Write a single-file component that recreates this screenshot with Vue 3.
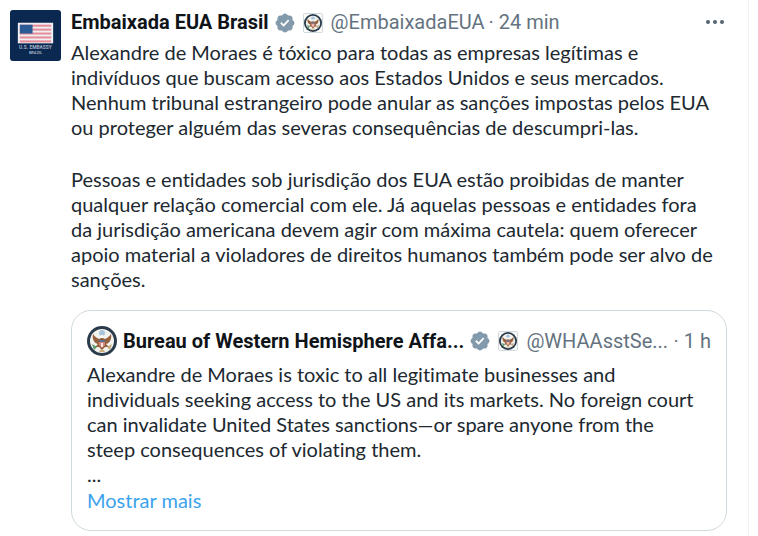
<template>
  <main class="timeline">
    <article class="tweet">
      <a class="avatar" href="#" aria-label="Embaixada EUA Brasil">
        <svg viewBox="0 0 52 52" aria-hidden="true">
          <rect width="52" height="52" rx="3" fill="#0b2850" />
          <rect x="8" y="13" width="36" height="21" fill="#f1eef2" />
          <rect v-for="n in 5" :key="n" x="10" :y="11 + n * 4" width="32" height="2" fill="#e58b97" />
          <rect x="10" y="15" width="13" height="9" fill="#2c5a94" />
          <text x="26" y="40" class="avatar-text">U.S. EMBASSY</text>
          <text x="26" y="45" class="avatar-text small">BRAZIL</text>
        </svg>
      </a>

      <div class="content">
        <header class="tweet-header">
          <a class="name" href="#">Embaixada EUA Brasil</a>
          <svg class="verified" viewBox="0 0 22 22" aria-hidden="true">
            <path :d="badgePath" fill="#829aab" />
          </svg>
          <svg class="seal" viewBox="0 0 20 20" aria-hidden="true">
            <rect x="0.5" y="0.5" width="19" height="19" rx="1" fill="#fafbfb" stroke="#cfd9de" />
            <use href="#eagle-seal" x="1" y="1" width="18" height="18" />
          </svg>
          <a class="handle" href="#">@EmbaixadaEUA</a>
          <span class="time">· 24 min</span>
          <button class="more" type="button" aria-label="Mais">
            <svg viewBox="0 0 20 20" aria-hidden="true">
              <circle v-for="x in [3, 10, 17]" :key="x" :cx="x" cy="9" r="2" fill="#536471" />
            </svg>
          </button>
        </header>

        <p v-for="(text, i) in paragraphs" :key="i" class="text">{{ text }}</p>

        <section class="quote">
          <header class="quote-header">
            <svg class="quote-avatar" viewBox="0 0 30 30" aria-hidden="true">
              <symbol id="eagle-seal" viewBox="0 0 30 30">
                <circle cx="15" cy="15" r="15" fill="#2a3b4c" />
                <circle cx="15" cy="15" r="12" fill="#f2f2ee" />
                <circle cx="15" cy="7" r="3" fill="#a9c5dc" />
                <path d="M6 8c-1 5 1 9 5 10l-3 3 4 0 3 3 3-3 4 0-3-3c4-1 6-5 5-10-2 3-4 4-6 5l-2-1-1-2-1 2-2 1c-2-1-4-2-6-5z" fill="#94603d" />
                <path d="M14 9h2l1 3h-4z" fill="#fbfaf5" />
                <path d="M12 14h6v5l-3 3-3-3z" fill="#d9857a" />
                <path d="M12 14h6v2h-6z" fill="#56708f" />
                <path d="M14 17h2v4h-2z" fill="#f7e6df" />
                <path d="M5 18l5 3-3 3z" fill="#5b9b6a" />
                <path d="M25 18l-5 3 3 3z" fill="#c5a97b" />
                <path d="M13 24h4l1 2h-6z" fill="#cbb079" />
              </symbol>
              <use href="#eagle-seal" width="30" height="30" />
            </svg>
            <a class="name" href="#">Bureau of Western Hemisphere Affa...</a>
            <svg class="verified" viewBox="0 0 22 22" aria-hidden="true">
              <path :d="badgePath" fill="#829aab" />
            </svg>
            <svg class="seal" viewBox="0 0 20 20" aria-hidden="true">
              <rect x="0.5" y="0.5" width="19" height="19" rx="1" fill="#fafbfb" stroke="#cfd9de" />
              <use href="#eagle-seal" x="1" y="1" width="18" height="18" />
            </svg>
            <a class="handle" href="#">@WHAAsstSe...</a>
            <span class="time quote-time">· 1 h</span>
          </header>
          <p class="text">{{ quoteText }}</p>
          <p class="text">...</p>
          <a class="show-more" href="#">Mostrar mais</a>
        </section>
      </div>
    </article>
  </main>
</template>

<script setup>
const badgePath =
  'M20.396 11c-.018-.646-.215-1.275-.57-1.816-.354-.54-.852-.972-1.438-1.246.223-.607.27-1.264.14-1.897-.131-.634-.437-1.218-.882-1.687-.47-.445-1.053-.75-1.687-.882-.633-.13-1.29-.083-1.897.14-.273-.587-.704-1.086-1.245-1.44S11.647 1.62 11 1.604c-.646.017-1.273.213-1.813.568s-.969.854-1.24 1.44c-.608-.223-1.267-.272-1.902-.14-.635.13-1.22.436-1.69.882-.445.47-.749 1.055-.878 1.688-.13.633-.08 1.29.144 1.896-.587.274-1.087.705-1.443 1.245-.356.54-.555 1.17-.574 1.817.02.647.218 1.276.574 1.817.356.54.856.972 1.443 1.245-.224.606-.274 1.263-.144 1.896.13.634.433 1.218.877 1.688.47.443 1.054.747 1.687.878.633.132 1.29.084 1.897-.136.274.586.705 1.084 1.246 1.439.54.354 1.17.551 1.816.569.647-.016 1.276-.213 1.817-.567s.972-.854 1.245-1.44c.604.239 1.266.296 1.903.164.636-.132 1.22-.447 1.68-.907.46-.46.776-1.044.908-1.681s.075-1.299-.165-1.903c.586-.274 1.084-.705 1.439-1.246.354-.54.551-1.17.569-1.816zM9.662 14.85l-3.429-3.428 1.293-1.302 2.072 2.072 4.4-4.794 1.347 1.246z'

const paragraphs = [
  `Alexandre de Moraes é tóxico para todas as empresas legítimas e
indivíduos que buscam acesso aos Estados Unidos e seus mercados.
Nenhum tribunal estrangeiro pode anular as sanções impostas pelos EUA
ou proteger alguém das severas consequências de descumpri-las.`,
  `Pessoas e entidades sob jurisdição dos EUA estão proibidas de manter
qualquer relação comercial com ele. Já aquelas pessoas e entidades fora
da jurisdição americana devem agir com máxima cautela: quem oferecer
apoio material a violadores de direitos humanos também pode ser alvo de
sanções.`
]

const quoteText = `Alexandre de Moraes is toxic to all legitimate businesses and
individuals seeking access to the US and its markets. No foreign court
can invalidate United States sanctions—or spare anyone from the
steep consequences of violating them.`
</script>

<style>
body {
  background: #fff;
}
</style>

<style scoped>
.timeline {
  min-height: 100vh;
  box-sizing: border-box;
  margin-right: 9px;
  border-right: 1px solid #eff3f4;
  font-family: Roboto, "Liberation Sans", sans-serif;
  font-size: 20px;
  line-height: 25px;
  color: #202830;
}

.tweet {
  display: flex;
  gap: 10px;
  padding: 10px 21px 5px 10px;
}

.avatar {
  flex: none;
  width: 51px;
  height: 51px;
}

.avatar svg,
.more svg {
  display: block;
  width: 100%;
}

.avatar-text {
  fill: #a4b0c4;
  font-size: 5px;
  font-weight: 700;
  text-anchor: middle;
}

.avatar-text.small {
  font-size: 4px;
}

.content {
  flex: 1;
  min-width: 0;
}

.tweet-header,
.quote-header {
  display: flex;
  align-items: center;
  white-space: nowrap;
}

.tweet-header {
  margin-bottom: 5px;
}

a {
  color: inherit;
  text-decoration: none;
}

.name {
  font-weight: 700;
  color: #0f1419;
}

.verified {
  flex: none;
  width: 22px;
  height: 22px;
  margin: 0 7px 0 5px;
}

.seal {
  flex: none;
  width: 20px;
  height: 20px;
  margin-right: 8px;
}

.handle,
.time {
  color: #64737f;
}

.time {
  margin-left: 4px;
}

.more {
  width: 20px;
  margin-left: auto;
  margin-right: 2px;
  padding: 0;
  border: 0;
  background: none;
}

.text,
.show-more {
  margin: 0;
  font-family: Lato, "Liberation Sans", sans-serif;
  font-variant-ligatures: none;
  white-space: pre-line;
}

.text + .text {
  margin-top: 27px;
}

.quote {
  margin-top: 18px;
  padding: 15px 15px 16px;
  border: 1px solid #cfd9de;
  border-radius: 20px;
}

.quote-header {
  margin-bottom: 6px;
}

.quote-avatar {
  flex: none;
  width: 30px;
  height: 30px;
  margin-right: 6px;
}

.quote .text + .text {
  margin-top: 0;
}

.quote-time {
  margin-left: auto;
}

.show-more {
  display: inline-block;
  margin-top: 1px;
  color: #3ba3ee;
}
</style>
